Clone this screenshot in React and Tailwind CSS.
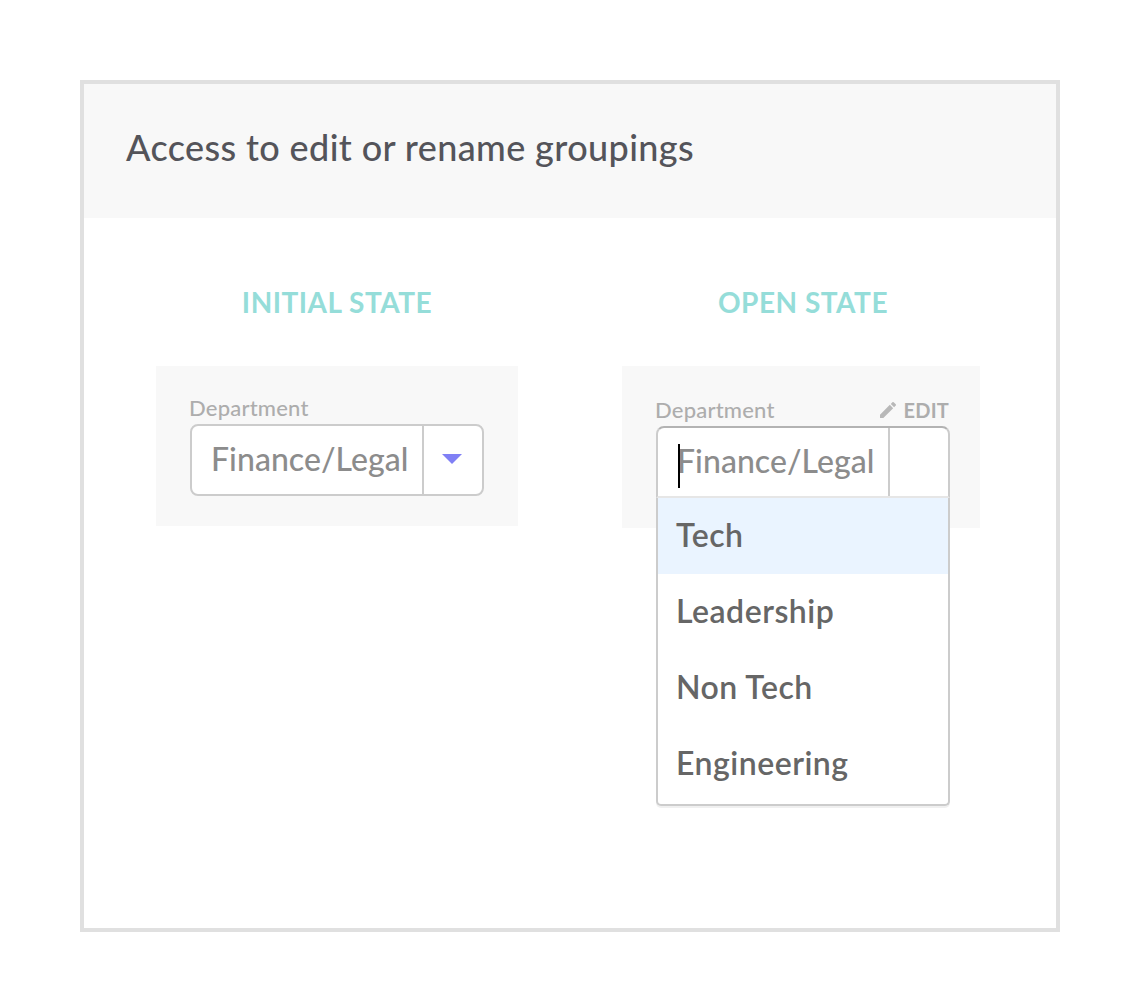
function PencilIcon() {
  return (
    <svg viewBox="3 3 18 18" className="mr-2 size-4 fill-[#b8b8b8]" aria-hidden="true">
      <path d="M3 17.25V21h3.75L17.81 9.94l-3.75-3.75L3 17.25zM20.71 7.04a1 1 0 0 0 0-1.41l-2.34-2.34a1 1 0 0 0-1.41 0l-1.83 1.83 3.75 3.75 1.83-1.83z" />
    </svg>
  );
}

function StateTitle({ children }) {
  return (
    <h2 className="h-7 text-[28px] leading-7 font-bold tracking-[0.5px] whitespace-nowrap text-[#95ddd9]">
      {children}
    </h2>
  );
}

function FieldLabel({ children }) {
  return (
    <span className="text-[22px] leading-[22px] font-medium tracking-[0.2px] text-[#adadad]">{children}</span>
  );
}

function FieldValue() {
  return (
    <span className="text-[32px] leading-8 font-medium tracking-[0.05px] text-[#8c8c8c]">Finance/Legal</span>
  );
}

const options = [
  { name: "Tech", active: true },
  { name: "Leadership" },
  { name: "Non Tech" },
  { name: "Engineering" },
];

function ClosedSelect() {
  return (
    <div className="flex h-[72px] w-[294px] rounded-lg border-2 border-[#cccccc] bg-white">
      <div className="flex w-[232px] items-center border-r-2 border-[#cccccc] pb-[3px] pl-[19px]">
        <FieldValue />
      </div>
      <div className="flex flex-1 items-center justify-center pr-0.5 pb-0.5">
        <svg viewBox="0 0 20 10" className="h-2.5 w-5 fill-[#8080f5]" aria-hidden="true">
          <path d="M0 0h20L10 10z" />
        </svg>
      </div>
    </div>
  );
}

function OpenSelect() {
  return (
    <div className="relative w-[294px]">
      <div className="flex h-[72px] rounded-t-lg border-2 border-t-[#b3b3b3] border-r-[#cccccc] border-b-[#e6e6e6] border-l-[#cccccc] bg-white">
        <div className="relative flex w-[232px] items-center border-r-2 border-[#cccccc] pb-[3px] pl-[19px]">
          <FieldValue />
          <span className="absolute top-4 left-5 h-11 w-0.5 bg-black" />
        </div>
      </div>
      <ul className="absolute top-[72px] left-0 h-[308px] w-[294px] rounded-b-[5px] border-2 border-t-0 border-[#cccccc] bg-white shadow-[0_2px_0_rgba(0,0,0,0.06)]">
        {options.map((o) => (
          <li
            key={o.name}
            className={`flex h-[76px] items-center pb-[3px] pl-[18px] text-[32px] leading-8 font-semibold tracking-[0.5px] text-[#666666] ${o.active ? "bg-[#eaf4ff]" : ""}`}
          >
            {o.name}
          </li>
        ))}
      </ul>
    </div>
  );
}

export default function App() {
  return (
    <div className="h-[1008px] w-[1140px] bg-white p-20 pb-[76px] font-['Lato',sans-serif]">
      <main className="h-[852px] border-4 border-[#e0e0e0] bg-white">
        <header className="flex h-[134px] items-center bg-[#f8f8f8] pb-[9px] pl-[42px]">
          <h1 className="text-[36px] leading-9 font-medium tracking-[0.38px] whitespace-nowrap text-[#54545a]">
            Access to edit or rename groupings
          </h1>
        </header>
        <div className="flex gap-[104px] pt-[70px] pl-[72px]">
          <section className="flex w-[362px] flex-col items-center gap-[50px]">
            <StateTitle>INITIAL STATE</StateTitle>
            <div className="h-[160px] w-full bg-[#f8f8f8] pt-8 pl-[34px]">
              <div className="-ml-px flex h-[26px] items-center pb-1.5">
                <FieldLabel>Department</FieldLabel>
              </div>
              <ClosedSelect />
            </div>
          </section>
          <section className="flex w-[358px] flex-col items-center gap-[50px]">
            <div className="pl-1">
              <StateTitle>OPEN STATE</StateTitle>
            </div>
            <div className="h-[162px] w-full bg-[#f8f8f8] pt-[34px] pl-[34px]">
              <div className="-ml-px flex h-[26px] w-[295px] items-center justify-between pb-1.5">
                <FieldLabel>Department</FieldLabel>
                <span className="flex items-center pr-px text-[20px] leading-5 font-bold tracking-[0.2px] text-[#adadad]">
                  <PencilIcon />
                  EDIT
                </span>
              </div>
              <OpenSelect />
            </div>
          </section>
        </div>
      </main>
    </div>
  );
}
